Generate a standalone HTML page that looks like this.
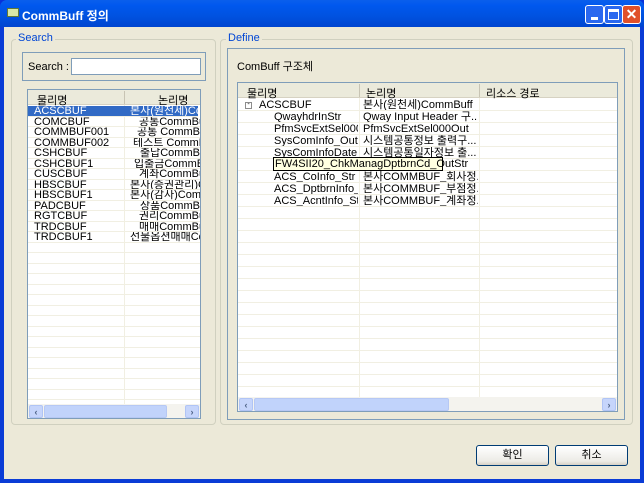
<!DOCTYPE html>
<html><head><meta charset="utf-8"><style>
*{margin:0;padding:0;box-sizing:border-box}
body{width:644px;height:483px;overflow:hidden;font-family:"Liberation Sans","Noto Sans CJK KR",sans-serif;font-size:11px;color:#000;background:#0831d9}
.a{position:absolute}
#win{position:absolute;left:0;top:0;width:644px;height:483px;background:#0a3cd6;border-radius:7px 7px 0 0}
#title{left:0;top:0;width:644px;height:27px;background:linear-gradient(#0a5fec,#0058ee 20%,#0052e0 60%,#0045d0);border-radius:7px 7px 0 0;color:#fff;font-size:12px;font-weight:bold}
#body{left:4px;top:27px;width:636px;height:452px;background:#ece9d8}
.grp{border:1px solid #d0d0bf;border-radius:4px}
.lg{background:#ece9d8;color:#0046d5;padding:0 2px;font-size:11px}
.panel{border:1px solid #7f9db9;background:#ece9d8}
.list{border:1px solid #7f9db9;background:#fff;overflow:hidden}
.hdr{background:#ebeadb;border-bottom:1px solid #d6d2c2;height:15px}
.row{position:absolute;left:0;right:0;border-bottom:1px solid #f1efe2;white-space:nowrap;overflow:hidden}
.btn{border:1px solid #003c74;border-radius:3px;background:linear-gradient(#fff,#ecebe6 80%,#d6d0c5);text-align:center;line-height:18px}
.sb{background:#f4f3ee}
.thumb{background:#c1d3fb;border:1px solid #b6c8f4;border-radius:2px}
.arr{background:#c6d5fb;border:1px solid #b0c4f5;border-radius:2px;color:#4d6185;font-size:9px;text-align:center;line-height:12px;font-weight:bold}
.tb{width:19px;height:19px;border:1px solid #fff;border-radius:3px;top:5px}
</style></head><body>
<div id="win">
<div id="title" class="a">
 <div class="a" style="left:7px;top:8px;width:12px;height:9px;background:#d8e8a8;border:1px solid #607838"></div>
 <div class="a" style="left:22px;top:7px">CommBuff 정의</div>
 <div class="a tb" style="left:585px;background:#2a68ef"><div class="a" style="left:5px;top:11px;width:7px;height:3px;background:#fff"></div></div>
 <div class="a tb" style="left:604px;background:#2a68ef"><div class="a" style="left:3px;top:3px;width:11px;height:11px;border:1px solid #fff;border-top-width:3px"></div></div>
 <div class="a tb" style="left:622px;background:#e0502a;color:#fff;font-size:14px;line-height:17px;text-align:center">✕</div>
</div>
<div id="body" class="a"></div>

<div class="a grp" style="left:11px;top:39px;width:205px;height:386px"></div>
<div class="a lg" style="left:16px;top:32px">Search</div>
<div class="a panel" style="left:22px;top:52px;width:184px;height:29px"></div>
<div class="a" style="left:28px;top:61px">Search :</div>
<div class="a" style="left:71px;top:58px;width:130px;height:17px;border:1px solid #7f9db9;background:#fff"></div>
<div class="a list" style="left:27px;top:89px;width:174px;height:330px">
 <div class="hdr a" style="left:0;top:0;width:172px"><span class="a" style="left:9px;top:2px">물리명</span><span class="a" style="left:96px;top:1px;width:1px;height:13px;background:#c8c4b4"></span><span class="a" style="left:130px;top:2px">논리명</span></div>
 <div class="a" style="left:96px;top:15px;width:1px;height:300px;background:#f1efe2"></div>
 <div id="ll"></div>
 <div class="a sb" style="left:0;top:314px;width:172px;height:15px">
  <div class="a arr" style="left:1px;top:1px;width:14px;height:13px">‹</div>
  <div class="a thumb" style="left:16px;top:1px;width:123px;height:13px"></div>
  <div class="a arr" style="left:157px;top:1px;width:14px;height:13px">›</div>
 </div>
</div>

<div class="a grp" style="left:220px;top:39px;width:413px;height:386px"></div>
<div class="a lg" style="left:226px;top:32px">Define</div>
<div class="a panel" style="left:227px;top:48px;width:398px;height:372px"></div>
<div class="a" style="left:237px;top:58px">ComBuff 구조체</div>
<div class="a list" style="left:237px;top:82px;width:381px;height:330px">
 <div class="hdr a" style="left:0;top:0;width:379px"><span class="a" style="left:9px;top:2px">물리명</span><span class="a" style="left:121px;top:1px;width:1px;height:13px;background:#c8c4b4"></span><span class="a" style="left:128px;top:2px">논리명</span><span class="a" style="left:241px;top:1px;width:1px;height:13px;background:#c8c4b4"></span><span class="a" style="left:248px;top:2px">리소스 경로</span></div>
 <div class="a" style="left:121px;top:15px;width:1px;height:300px;background:#f1efe2"></div>
 <div class="a" style="left:241px;top:15px;width:1px;height:300px;background:#f1efe2"></div>
 <div id="rl"></div>
 <div class="a sb" style="left:0;top:314px;width:379px;height:15px">
  <div class="a arr" style="left:1px;top:1px;width:14px;height:13px">‹</div>
  <div class="a thumb" style="left:16px;top:1px;width:195px;height:13px"></div>
  <div class="a arr" style="left:364px;top:1px;width:14px;height:13px">›</div>
 </div>
</div>
<div class="a" style="left:273px;top:157px;width:170px;height:14px;background:#ffffe1;border:1px solid #000;line-height:12px;padding-left:1px">FW4SII20_ChkManagDptbrnCd_OutStr</div>

<div class="a btn" style="left:476px;top:445px;width:73px;height:21px">확인</div>
<div class="a btn" style="left:555px;top:445px;width:73px;height:21px">취소</div>
</div>
<script>
var L=[["ACSCBUF","본사(원천세)CommBuff",102],["COMCBUF","공통CommBuff",111],["COMMBUF001","공통 CommBuff",109],["COMMBUF002","테스트 CommBuff",105],["CSHCBUF","출납CommBuff",112],["CSHCBUF1","입출금CommBuff",106],["CUSCBUF","계좌CommBuff",111],["HBSCBUF","본사(증권관리)CommBuff",102],["HBSCBUF1","본사(감사)CommBuff",102],["PADCBUF","상품CommBuff",112],["RGTCBUF","권리CommBuff",111],["TRDCBUF","매매CommBuff",111],["TRDCBUF1","선물옵션매매CommBuff",102]];
var h="";
for(var i=0;i<29;i++){var t=16+i*10.5;var r=L[i]||["","",0];var sel=i==0;
h+='<div class="row" style="top:'+t+'px;height:10.5px;line-height:10px;'+(sel?'background:#316ac5;color:#fff;right:auto;width:170px;':'')+'"><span class="a" style="left:6px;top:0">'+r[0]+'</span><span class="a" style="left:'+r[2]+'px;top:0">'+r[1]+'</span></div>';}
document.getElementById("ll").outerHTML=h;
var R=[["ACSCBUF","본사(원천세)CommBuff",0],["QwayhdrInStr","Qway Input Header 구...",1],["PfmSvcExtSel0000O","PfmSvcExtSel000Out",1],["SysComInfo_OutSt","시스템공통정보 출력구...",1],["SysComInfoDate_C","시스템공통일자정보 출...",1],["FW4SII20_","본사(...명)...",1],["ACS_CoInfo_Str","본사COMMBUF_회사정...",1],["ACS_DptbrnInfo_Str","본사COMMBUF_부점정...",1],["ACS_AcntInfo_Str","본사COMMBUF_계좌정...",1]];
h="";
for(var i=0;i<25;i++){var t=16+i*12;var r=R[i]||["","",0];
h+='<div class="row" style="top:'+t+'px;height:12px;line-height:12px">'+(i==0?'<span class="a" style="left:7px;top:3px;width:7px;height:7px;border:1px solid #8c8c8c;background:#fff;font-size:7px;line-height:4px;text-align:center">-</span>':'')+'<span class="a" style="left:'+(r[2]?36:21)+'px;top:0;width:'+(r[2]?84:99)+'px;overflow:hidden">'+r[0]+'</span><span class="a" style="left:125px;top:0;width:115px;overflow:hidden">'+r[1]+'</span></div>';}
document.getElementById("rl").outerHTML=h;
</script>
</body></html>
